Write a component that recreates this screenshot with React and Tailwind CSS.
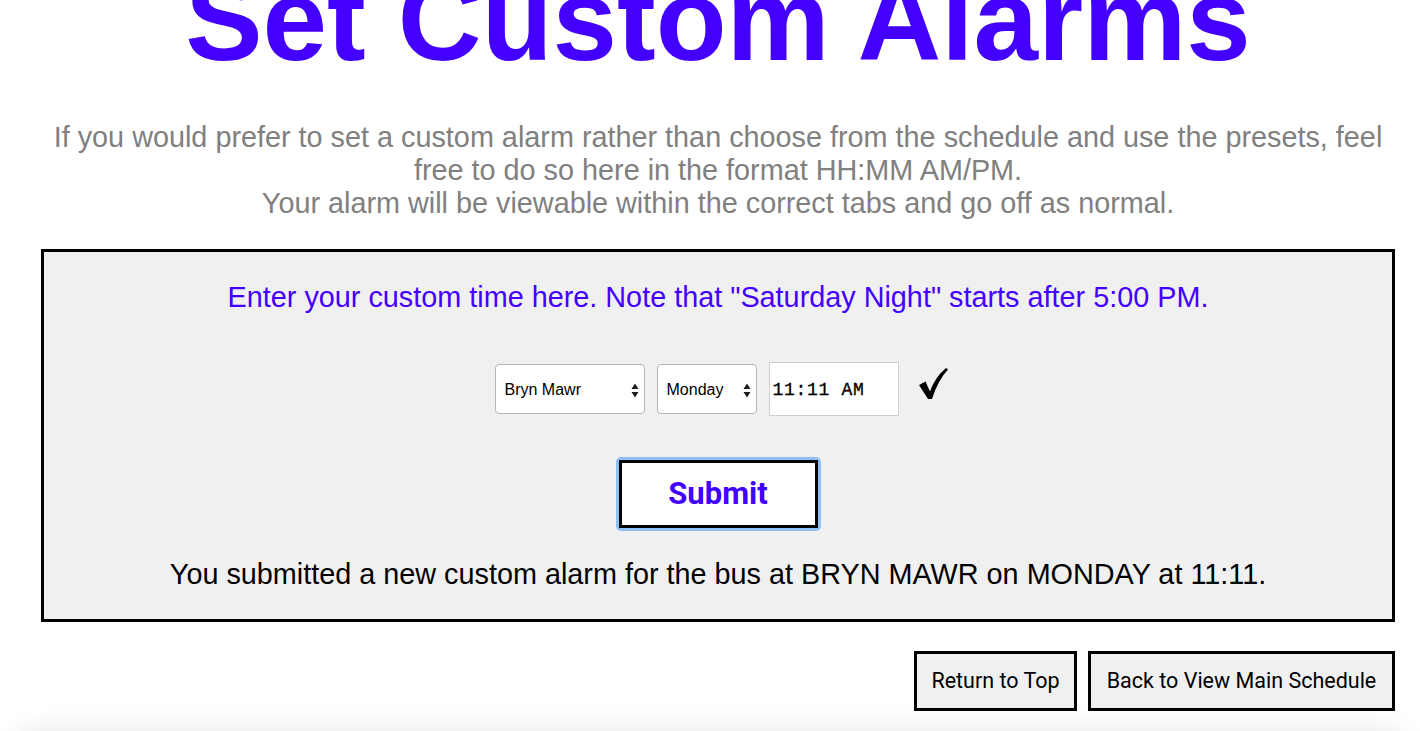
import React from "react";

function Arrows() {
  return (
    <svg width="8" height="15" viewBox="0 0 8 15" className="shrink-0">
      <path d="M4 0.5 L7.5 6 L0.5 6 Z" fill="#1a1a1a" />
      <path d="M4 14.5 L7.5 9 L0.5 9 Z" fill="#1a1a1a" />
    </svg>
  );
}

function FakeSelect({ label, width }) {
  return (
    <div
      className={`flex items-center justify-between h-[50px] bg-white border border-[#b5b5b5] rounded-[4px] pl-[9px] pr-[5px] pt-[2px] text-[16px] text-black ${width}`}
      style={{ fontFamily: '"Liberation Sans", Arial, sans-serif' }}
    >
      <span>{label}</span>
      <Arrows />
    </div>
  );
}

export default function App() {
  return (
    <div
      className="w-[1420px] h-[731px] overflow-hidden bg-white relative"
      style={{ fontFamily: '"Liberation Sans", Arial, Helvetica, sans-serif' }}
    >
      <h1 className="mt-[-38px] text-center text-[116px] leading-[116px] font-bold text-[#4400ff] ml-[16px]">
        Set Custom Alarms
      </h1>
      <p className="mt-[43px] ml-[16px] text-center text-[28.8px] leading-[33px] text-[#808080] px-[30px]">
        If you would prefer to set a custom alarm rather than choose from the schedule and use the presets, feel free to do so here in the format HH:MM AM/PM.
        <br />
        Your alarm will be viewable within the correct tabs and go off as normal.
      </p>
      <div className="mt-[29px] ml-[41px] w-[1354px] h-[373px] border-[3px] border-black bg-[#f0f0f0] flex flex-col items-center">
        <div className="mt-[29px] text-[28.8px] leading-[33px] text-[#4400ff]">
          Enter your custom time here. Note that "Saturday Night" starts after 5:00 PM.
        </div>
        <div className="mt-[48px] flex items-center ml-[6px]">
          <FakeSelect label="Bryn Mawr" width="w-[150px]" />
          <div className="w-[12px]" />
          <FakeSelect label="Monday" width="w-[100px]" />
          <div className="w-[12px]" />
          <div className="h-[54px] w-[130px] bg-white border border-[#cfcfcf] flex items-center pl-[3px] pt-[3px] text-[18px] tracking-[0.7px] text-black [-webkit-text-stroke:0.3px_black]"
            style={{ fontFamily: '"Liberation Mono", "Courier New", monospace' }}>
            11:11 AM
          </div>
          <svg width="30" height="32" viewBox="0 0 30 32" className="ml-[19px] mb-[10px]">
            <path d="M1 17 L7.5 13.5 L12 23.5 Q17 9 28 0 L30 1.5 Q20 12 14 31 L10 31 Z" fill="#000" />
          </svg>
        </div>
        <div className="mt-[41px] rounded-[5px] border-[3px] border-[#8ec0f7] p-0">
          <button className="w-[199px] h-[68px] bg-white border-[3px] border-black text-[31px] font-bold text-[#4400ff]"
            style={{ fontFamily: 'Roboto, "Liberation Sans", Arial, sans-serif' }}>
            Submit
          </button>
        </div>
        <div className="mt-[27px] text-[28.8px] leading-[33px] text-black">
          You submitted a new custom alarm for the bus at BRYN MAWR on MONDAY at 11:11.
        </div>
      </div>
      <div className="mt-[29px] ml-[41px] w-[1354px] flex justify-end gap-[11px]">
        <button className="w-[163px] h-[60px] border-[3px] border-black bg-[#f0f0f0] text-[21.5px] text-black"
          style={{ fontFamily: 'Roboto, "Liberation Sans", Arial, sans-serif' }}>
          Return to Top
        </button>
        <button className="w-[307px] h-[60px] border-[3px] border-black bg-[#f0f0f0] text-[21.5px] text-black"
          style={{ fontFamily: 'Roboto, "Liberation Sans", Arial, sans-serif' }}>
          Back to View Main Schedule
        </button>
      </div>
      <div className="mt-[30px] mx-[10px] h-[200px] rounded-[30px] bg-white shadow-[0_-10px_28px_rgba(0,0,0,0.1)]" />
    </div>
  );
}
